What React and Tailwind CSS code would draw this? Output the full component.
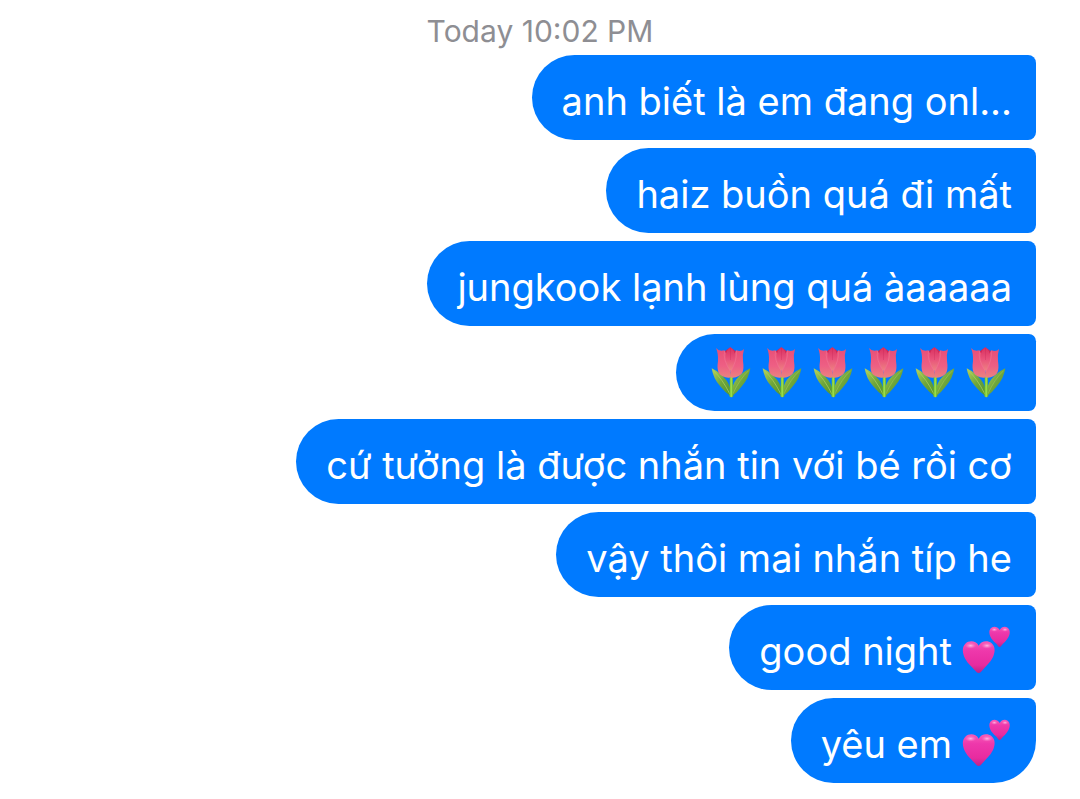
import { clsx } from 'clsx';

const messages = [
  { id: 1, text: 'anh biết là em đang onl...' },
  { id: 2, text: 'haiz buồn quá đi mất' },
  { id: 3, text: 'jungkook lạnh lùng quá àaaaaa' },
  { id: 4, tulips: 6 },
  { id: 5, text: 'cứ tưởng là được nhắn tin với bé rồi cơ' },
  { id: 6, text: 'vậy thôi mai nhắn típ he' },
  { id: 7, text: 'good night', hearts: true },
  { id: 8, text: 'yêu em', hearts: true },
];

function EmojiDefs() {
  return (
    <svg className="absolute h-0 w-0" aria-hidden="true">
      <defs>
        <linearGradient id="petal" x1="0" y1="0" x2="0" y2="1">
          <stop offset="0" stopColor="#e84e76" />
          <stop offset="0.6" stopColor="#ee5f84" />
          <stop offset="1" stopColor="#e9837f" />
        </linearGradient>
        <linearGradient id="petalFront" x1="0" y1="0" x2="0" y2="1">
          <stop offset="0" stopColor="#d93160" />
          <stop offset="0.5" stopColor="#e9527b" />
          <stop offset="1" stopColor="#ed8480" />
        </linearGradient>
        <linearGradient id="leaf" x1="0" y1="0" x2="1" y2="1">
          <stop offset="0" stopColor="#b5d35c" />
          <stop offset="0.5" stopColor="#6fa63c" />
          <stop offset="1" stopColor="#4c9430" />
        </linearGradient>
        <linearGradient id="stem" x1="0" y1="0" x2="1" y2="0">
          <stop offset="0" stopColor="#6cb52c" />
          <stop offset="0.5" stopColor="#9ee24b" />
          <stop offset="1" stopColor="#59a32c" />
        </linearGradient>
        <linearGradient id="heart" x1="0" y1="0" x2="0" y2="1">
          <stop offset="0" stopColor="#f75bb8" />
          <stop offset="0.3" stopColor="#ee38ab" />
          <stop offset="0.75" stopColor="#e82b9f" />
          <stop offset="1" stopColor="#bd2388" />
        </linearGradient>
        <radialGradient id="shine">
          <stop offset="0" stopColor="#ffb9e3" />
          <stop offset="1" stopColor="#ff7ccb" stopOpacity="0" />
        </radialGradient>
      </defs>
    </svg>
  );
}

function Tulip() {
  return (
    <svg viewBox="33 26 120 153" className="h-[51px] w-10" role="img" aria-label="🌷">
      <path d="M35 90 Q61 103 78 124 Q94 144 94 175 Q76 163 60 143 Q40 121 35 90Z" fill="url(#leaf)" />
      <path d="M40 97 Q67 121 90 168" stroke="#b7d35f" strokeWidth="2" fill="none" />
      <path d="M151 90 Q125 103 108 124 Q93 144 94 175 Q112 163 126 143 Q146 121 151 90Z" fill="url(#leaf)" />
      <path d="M146 97 Q119 121 98 168" stroke="#9cc650" strokeWidth="2" fill="none" />
      <path d="M89 113 H99 Q98 144 100 174 Q94 180 88 174 Q90 144 89 113Z" fill="url(#stem)" />
      <path d="M72 40 L91 27 L110 40 L102 80 H80Z" fill="#cf2858" />
      <path d="M48 29 Q56 40 73 36 Q90 60 93 112 Q94 119 85 118 Q65 117 57 105 Q50 94 54 68 Q55 45 48 29Z" fill="url(#petal)" />
      <path d="M132 32 Q125 41 109 36 Q93 60 91 112 Q90 119 99 118 Q117 117 126 105 Q133 94 129 68 Q127 48 132 32Z" fill="url(#petal)" />
      <path d="M91 27 Q105 37 105 54 Q106 75 92 98 Q76 75 77 54 Q77 38 91 27Z" fill="url(#petalFront)" />
      <path d="M74 37 Q67 62 92 100 Q112 66 109 37" stroke="#f283a0" strokeWidth="2" fill="none" opacity="0.6" />
      <path d="M91 29 V65" stroke="#b91d4e" strokeWidth="2" opacity="0.4" />
    </svg>
  );
}

function TwoHearts() {
  return (
    <svg viewBox="36 18 144 144" className="h-12 w-12" role="img" aria-label="💕">
      <path
        d="M86 77 C77 61 57 61 46 71 C34 83 38 103 46 117 C54 132 66 141 76 152 Q86 166 96 152 C107 139 121 128 129 111 C136 95 136 79 125 70 C112 60 94 63 86 77Z"
        fill="url(#heart)"
      />
      <path
        d="M149 30 C142 18 128 17 121 26 C114 36 120 51 128 60 C134 68 140 70 144 78 Q149 84 154 77 C160 69 169 64 175 52 C181 41 181 29 173 23 C165 17 154 20 149 30Z"
        fill="url(#heart)"
      />
      <ellipse cx="62" cy="77" rx="17" ry="9" fill="url(#shine)" />
      <ellipse cx="111" cy="77" rx="17" ry="9" fill="url(#shine)" />
      <ellipse cx="133" cy="29" rx="10" ry="6" fill="url(#shine)" />
      <ellipse cx="165" cy="29" rx="10" ry="6" fill="url(#shine)" />
    </svg>
  );
}

function Bubble({ message, isLast }) {
  return (
    <li
      className={clsx(
        'flex max-w-full items-center rounded-l-[43px] bg-[#007aff] pr-6 pl-[30px] text-[38px] text-white',
        isLast ? 'rounded-tr-lg rounded-br-[43px]' : 'rounded-r-lg',
        message.tulips ? 'h-[77px]' : 'min-h-[85px]',
      )}
    >
      {message.text && <span className="pt-2 leading-[77px]">{message.text}</span>}
      {message.hearts && (
        <span className="mr-0.5 ml-2.5 pt-1">
          <TwoHearts />
        </span>
      )}
      {message.tulips && (
        <span className="flex gap-[11px] pr-1.5 pl-[5px]">
          {Array.from({ length: message.tulips }, (_, i) => (
            <Tulip key={i} />
          ))}
        </span>
      )}
    </li>
  );
}

export default function App() {
  return (
    <main className="bg-white px-11 pt-2 pb-4 font-['Inter','Noto_Sans',sans-serif]">
      <EmojiDefs />
      <p className="text-center text-[30px] leading-[47px] text-[#8e8e93]">
        <time>Today 10:02 PM</time>
      </p>
      <ul className="flex flex-col items-end gap-2">
        {messages.map((m, i) => (
          <Bubble key={m.id} message={m} isLast={i === messages.length - 1} />
        ))}
      </ul>
    </main>
  );
}
